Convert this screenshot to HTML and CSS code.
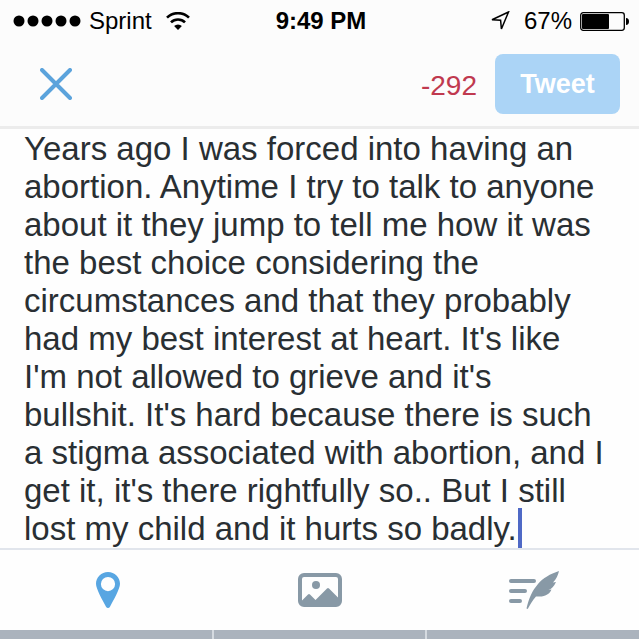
FILE: index.html
```html
<!DOCTYPE html>
<html lang="en">
<head>
  <meta charset="UTF-8">
  <title>Compose Tweet</title>
  <meta name="viewport" content="width=device-width, initial-scale=1.0">
  <link rel="stylesheet" href="styles.css">
</head>
<body>

  <header class="top">
    <!-- STATUS BAR -->
    <div class="status">
      <div class="status-left">
        <svg width="68" height="12" viewBox="0 0 68 12">
          <circle cx="6" cy="6" r="5.5"/><circle cx="20" cy="6" r="5.5"/><circle cx="34" cy="6" r="5.5"/><circle cx="48" cy="6" r="5.5"/><circle cx="62" cy="6" r="5.5"/>
        </svg>
        <span class="carrier">Sprint</span>
        <svg width="24" height="18" viewBox="0 0 24 18" fill="none" stroke="#000" stroke-width="2.6">
          <path d="M1 5.700a15.600 15.600 0 0 1 22 0"/>
          <path d="M5 10.400a9.800 9.800 0 0 1 14 0"/>
          <path d="M12 18l-3.900-4a5.500 5.500 0 0 1 7.800 0z" fill="#000" stroke="none"/>
        </svg>
      </div>
      <span class="clock">9:49 PM</span>
      <div class="status-right">
        <svg width="20" height="20" viewBox="0 0 20 20" fill="none" stroke="#000" stroke-width="1.5">
          <path d="M18.5 1L2 8.800l8.600.4 .8 8.800z"/>
        </svg>
        <span class="percent">67%</span>
        <svg width="49" height="19" viewBox="0 0 49 19">
          <rect x=".7" y=".7" width="43.6" height="17.6" rx="2.5" fill="none" stroke="#000" stroke-width="1.3"/>
          <rect x="2" y="2" width="27" height="15" rx="1"/>
          <path d="M46 6c2 0 3 1.500 3 3.500s-1 3.500-3 3.500z"/>
        </svg>
      </div>
    </div>

    <!-- CLOSE / COUNT / TWEET -->
    <div class="nav">
      <button class="close" type="button" aria-label="Close">
        <svg width="32" height="32" viewBox="0 0 32 32" fill="none" stroke="#5ba3dc" stroke-width="4" stroke-linecap="round">
          <path d="M2 2l28 28M30 2L2 30"/>
        </svg>
      </button>
      <span class="count">-292</span>
      <button class="tweet" type="button">Tweet</button>
    </div>
  </header>

  <main class="compose">
    <textarea class="message" rows="11" spellcheck="false" aria-label="Tweet text">Years ago I was forced into having an abortion. Anytime I try to talk to anyone about it they jump to tell me how it was the best choice considering the circumstances and that they probably had my best interest at heart. It's like I'm not allowed to grieve and it's bullshit. It's hard because there is such a stigma associated with abortion, and I get it, it's there rightfully so.. But I still lost my child and it hurts so badly.</textarea>
    <span class="caret"></span>
  </main>

  <!-- ATTACHMENTS -->
  <div class="tools">
    <button type="button" aria-label="Location">
      <svg width="24" height="36" viewBox="0 0 24 36">
        <path d="M12 0C5.300 0 0 5.200 0 11.800c0 5 6.500 16.500 10 22.900 1 1.700 3 1.700 4 0C17.500 28.300 24 16.800 24 11.800 24 5.200 18.700 0 12 0zM12 5a7 7 0 1 1 0 14.200A7 7 0 0 1 12 5z" fill="#58a6e2" fill-rule="evenodd"/>
      </svg>
    </button>
    <button type="button" aria-label="Photo">
      <svg width="44" height="34" viewBox="0 0 44 34" fill="#8899a6">
        <path d="M6 0h32a6 6 0 0 1 6 6v22a6 6 0 0 1-6 6H6a6 6 0 0 1-6-6V6a6 6 0 0 1 6-6zM6 4a2 2 0 0 0-2 2v21.500l6-6q1-1 2 0l5.500 5.500L29 15.500q1-1 2 0l9 9V6a2 2 0 0 0-2-2z" fill-rule="evenodd"/>
        <circle cx="18" cy="12" r="4"/>
      </svg>
    </button>
    <button type="button" aria-label="Drafts">
      <svg width="52" height="38" viewBox="-2 0 52 38">
        <path d="M2 10h23M2 20h14M2 30h9" stroke="#8899a6" stroke-width="4" stroke-linecap="round"/>
        <path d="M50 0C41 3 34 7 29 13c-6 7-9 14-11.500 24.500l1.200.5C21 34 23 30 27 25.500c5 0 8 .5 12-2.500 1.500-1 2.500-2.500 3.500-4.500l-3 .5c3-1 5.500-3.500 7.500-8l-3 .5C47.500 8 49 4 50 0z" fill="#8899a6"/>
      </svg>
    </button>
  </div>

  <div class="keyboard"><span></span><span></span><span></span></div>

</body>
</html>
```
FILE: styles.css
```css
* {
  margin: 0;
  padding: 0;
  box-sizing: border-box;
}

body {
  display: flex;
  flex-direction: column;
  min-height: 100vh;
  background: #fefefe;
  color: #292f33;
  font-family: "Liberation Sans", Arial, sans-serif;
  overflow: hidden;
}

button {
  border: 0;
  background: none;
  font-family: inherit;
}

svg {
  display: block;
}

.top {
  background: #fcfcfc;
  border-bottom: 3px solid #ececec;
}

/* Status bar */
.status {
  display: grid;
  grid-template-columns: 1fr auto 1fr;
  align-items: center;
  height: 42px;
  padding: 0 10px 0 13px;
  color: #000;
  font-size: 24px;
}

.status-left,
.status-right {
  display: flex;
  align-items: center;
  gap: 8px;
}

.carrier {
  margin-right: 6px;
}

.clock {
  font-weight: bold;
}

.status-right {
  justify-content: flex-end;
}

.percent {
  margin-left: 6px;
}

/* Navigation */
.nav {
  display: flex;
  align-items: center;
  height: 84px;
  padding: 0 19px 0 40px;
}

.close {
  margin-right: auto;
}

.count {
  padding-top: 4px;
  margin-right: 18px;
  color: #c0394f;
  font-size: 28px;
}

.tweet {
  width: 125px;
  height: 60px;
  border-radius: 8px;
  background: #abd4f6;
  color: #fff;
  font-size: 27px;
  font-weight: bold;
}

/* Message */
.compose {
  position: relative;
  padding: 1px 32px 0 24px;
}

.message {
  display: block;
  width: 100%;
  border: 0;
  outline: 0;
  resize: none;
  overflow: hidden;
  background: none;
  color: inherit;
  font-family: inherit;
  font-size: 33px;
  line-height: 38px;
}

.caret {
  position: absolute;
  bottom: 0;
  left: 518px;
  width: 4px;
  height: 40px;
  background: #4f69c6;
}

/* Toolbar */
.tools {
  display: grid;
  grid-template-columns: repeat(3, 1fr);
  height: 82px;
  padding-left: 2px;
  border-top: 2px solid #e1e5ec;
}

.tools button {
  display: flex;
  align-items: center;
  justify-content: center;
}

.keyboard {
  display: grid;
  flex: 1;
  grid-template-columns: repeat(3, 1fr);
  gap: 2px;
  background: #d5dae0;
}

.keyboard span {
  background: #abb3bd;
}
```
